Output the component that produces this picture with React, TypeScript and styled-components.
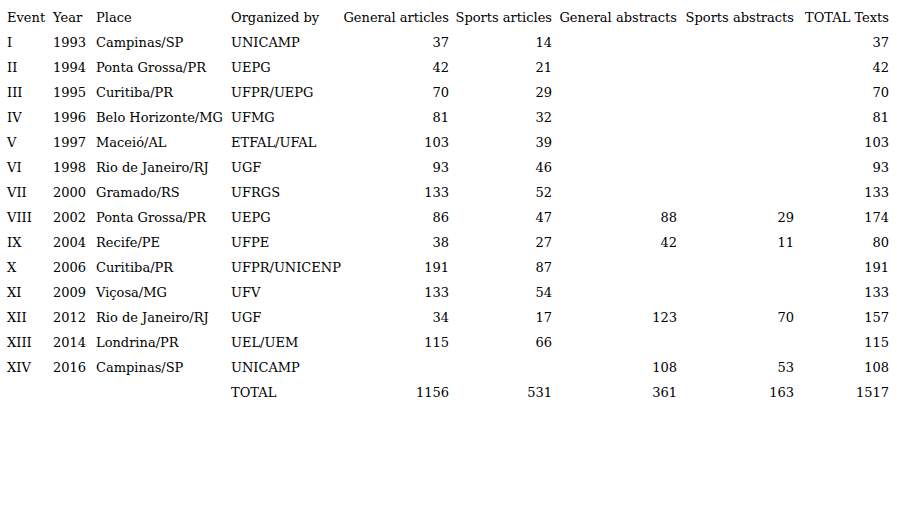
import styled, { createGlobalStyle } from "styled-components";

const GlobalStyle = createGlobalStyle`
  html, body {
    margin: 0;
    padding: 0;
    background: #ffffff;
  }
  body {
    font-family: "DejaVu Serif", "Liberation Serif", serif;
    color: #000000;
  }
`;

interface Row {
  event: string;
  year: string;
  place: string;
  org: string;
  genArt: string;
  sportArt: string;
  genAbs: string;
  sportAbs: string;
  total: string;
}

const rows: Row[] = [
  { event: "I", year: "1993", place: "Campinas/SP", org: "UNICAMP", genArt: "37", sportArt: "14", genAbs: "", sportAbs: "", total: "37" },
  { event: "II", year: "1994", place: "Ponta Grossa/PR", org: "UEPG", genArt: "42", sportArt: "21", genAbs: "", sportAbs: "", total: "42" },
  { event: "III", year: "1995", place: "Curitiba/PR", org: "UFPR/UEPG", genArt: "70", sportArt: "29", genAbs: "", sportAbs: "", total: "70" },
  { event: "IV", year: "1996", place: "Belo Horizonte/MG", org: "UFMG", genArt: "81", sportArt: "32", genAbs: "", sportAbs: "", total: "81" },
  { event: "V", year: "1997", place: "Maceió/AL", org: "ETFAL/UFAL", genArt: "103", sportArt: "39", genAbs: "", sportAbs: "", total: "103" },
  { event: "VI", year: "1998", place: "Rio de Janeiro/RJ", org: "UGF", genArt: "93", sportArt: "46", genAbs: "", sportAbs: "", total: "93" },
  { event: "VII", year: "2000", place: "Gramado/RS", org: "UFRGS", genArt: "133", sportArt: "52", genAbs: "", sportAbs: "", total: "133" },
  { event: "VIII", year: "2002", place: "Ponta Grossa/PR", org: "UEPG", genArt: "86", sportArt: "47", genAbs: "88", sportAbs: "29", total: "174" },
  { event: "IX", year: "2004", place: "Recife/PE", org: "UFPE", genArt: "38", sportArt: "27", genAbs: "42", sportAbs: "11", total: "80" },
  { event: "X", year: "2006", place: "Curitiba/PR", org: "UFPR/UNICENP", genArt: "191", sportArt: "87", genAbs: "", sportAbs: "", total: "191" },
  { event: "XI", year: "2009", place: "Viçosa/MG", org: "UFV", genArt: "133", sportArt: "54", genAbs: "", sportAbs: "", total: "133" },
  { event: "XII", year: "2012", place: "Rio de Janeiro/RJ", org: "UGF", genArt: "34", sportArt: "17", genAbs: "123", sportAbs: "70", total: "157" },
  { event: "XIII", year: "2014", place: "Londrina/PR", org: "UEL/UEM", genArt: "115", sportArt: "66", genAbs: "", sportAbs: "", total: "115" },
  { event: "XIV", year: "2016", place: "Campinas/SP", org: "UNICAMP", genArt: "", sportArt: "", genAbs: "108", sportAbs: "53", total: "108" },
  { event: "", year: "", place: "", org: "TOTAL", genArt: "1156", sportArt: "531", genAbs: "361", sportAbs: "163", total: "1517" },
];

// column widths, taken from where each column starts/ends in the sheet
const widths = [46, 43, 135, 110, 108, 103, 125, 117, 95];

const App = () => {
  return (
    <>
      <GlobalStyle />
      <Page>
        <Table>
          <colgroup>
            {widths.map((w, i) => (
              <col key={i} style={{ width: w }} />
            ))}
          </colgroup>
          <thead>
            <tr>
              <Head>Event</Head>
              <Head>Year</Head>
              <Head>Place</Head>
              <Head>Organized by</Head>
              <Head $num>General articles</Head>
              <Head $num>Sports articles</Head>
              <Head $num>General abstracts</Head>
              <Head $num>Sports abstracts</Head>
              <Head $num>TOTAL Texts</Head>
            </tr>
          </thead>
          <tbody>
            {rows.map((r, i) => (
              <tr key={i}>
                <Cell>{r.event}</Cell>
                <Cell>{r.year}</Cell>
                <Cell>{r.place}</Cell>
                <Cell>{r.org}</Cell>
                <Cell $num>{r.genArt}</Cell>
                <Cell $num>{r.sportArt}</Cell>
                <Cell $num>{r.genAbs}</Cell>
                <Cell $num>{r.sportAbs}</Cell>
                <Cell $num>{r.total}</Cell>
              </tr>
            ))}
          </tbody>
        </Table>
      </Page>
    </>
  );
};

export default App;

const Page = styled.div`
  width: 897px;
  height: 527px;
  padding: 5px 0 0 7px;
  box-sizing: border-box;
  background: #ffffff;
`;

const Table = styled.table`
  border-collapse: collapse;
  table-layout: fixed;
  font-size: 13px;
`;

const Head = styled.th<{ $num?: boolean }>`
  height: 25px;
  padding: 0;
  font-weight: normal;
  white-space: nowrap;
  text-align: ${({ $num }) => ($num ? "right" : "left")};
  vertical-align: middle;
`;

const Cell = styled.td<{ $num?: boolean }>`
  height: 25px;
  padding: 0;
  white-space: nowrap;
  text-align: ${({ $num }) => ($num ? "right" : "left")};
  vertical-align: middle;
`;
